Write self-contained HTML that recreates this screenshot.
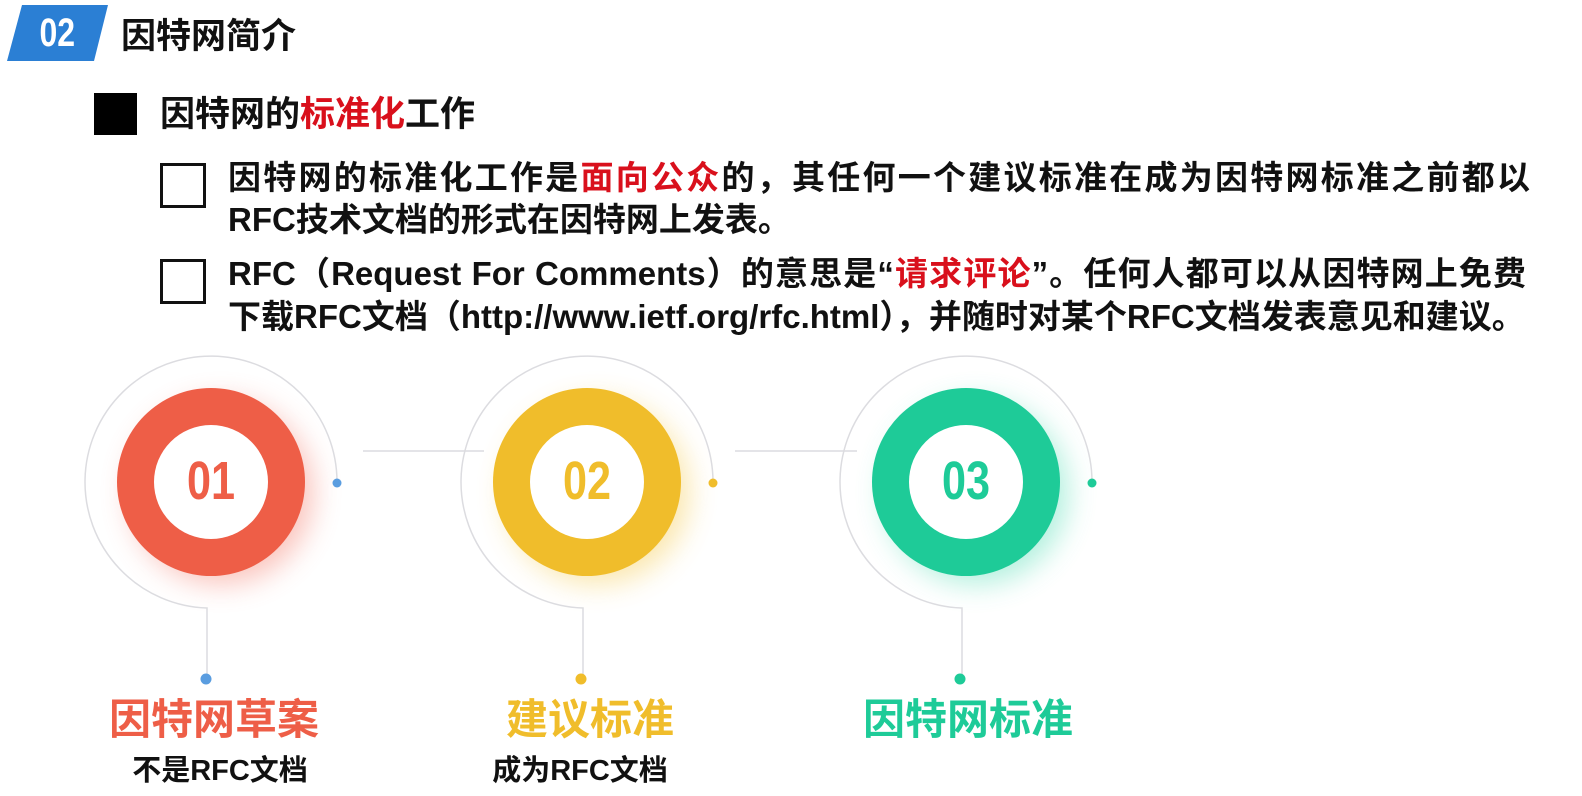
<!DOCTYPE html>
<html><head><meta charset="utf-8"><style>
body{margin:0;width:1582px;height:796px;background:#fff;overflow:hidden;position:relative;font-family:"Liberation Sans","Noto Sans CJK SC",sans-serif;font-weight:bold;color:#111}
.a{position:absolute;white-space:nowrap;line-height:1}
.red{color:#d9101c}
.box{position:absolute;width:40px;height:39px;border:3px solid #111}
.ln{position:absolute;left:228px;font-size:33px;white-space:nowrap;line-height:1}
.j{width:1302px;text-align:justify;text-align-last:justify}
.num{font-family:"Liberation Sans",sans-serif;font-size:54px;transform:scaleX(.8);display:inline-block}
.lab{position:absolute;width:300px;text-align:center;line-height:1}
</style></head><body>
<svg class="a" style="left:0;top:0" width="120" height="70"><polygon points="22,5 108,5 94,61 7,61" fill="#2b7fd4"/></svg>
<div class="a" style="left:32px;top:13px;width:50px;text-align:center;color:#fff;font-size:40px"><span style="display:inline-block;transform:scaleX(.8)">02</span></div>
<div class="a" style="left:121px;top:19px;font-size:35px">因特网简介</div>
<div class="a" style="left:94px;top:93px;width:43px;height:42px;background:#000"></div>
<div class="a" style="left:160px;top:97px;font-size:35px">因特网的<span class="red">标准化</span>工作</div>

<div class="box" style="left:160px;top:163px"></div>
<div class="box" style="left:160px;top:259px"></div>
<div class="ln j" style="top:161px">因特网的标准化工作是<span class="red">面向公众</span>的，其任何一个建议标准在成为因特网标准之前都以</div>
<div class="ln" style="top:203px">RFC技术文档的形式在因特网上发表。</div>
<div class="ln j" style="top:257px;width:1298px">RFC（Request For Comments）的意思是“<span class="red">请求评论</span>”。任何人都可以从因特网上免费</div>
<div class="ln" style="top:300px">下载RFC文档（http://www.ietf.org/rfc.html），并随时对某个RFC文档发表意见和建议。</div>

<svg class="a" style="left:0;top:0" width="1582" height="796">
<defs>
<filter id="g" x="-50%" y="-50%" width="200%" height="200%"><feGaussianBlur stdDeviation="14"/></filter>
</defs>
<g fill="none" stroke="#dcdce0" stroke-width="1.5">
<line x1="363" y1="451" x2="484" y2="451"/>
<line x1="735" y1="451" x2="857" y2="451"/>
</g>
<circle cx="221" cy="492" r="92" fill="#f47a6a" opacity=".45" filter="url(#g)"/>
<path d="M337 482 A126 126 0 1 0 207 608 L207 678" fill="none" stroke="#dcdce0" stroke-width="1.5"/>
<circle cx="211" cy="482" r="94" fill="#ee5e47"/>
<circle cx="211" cy="482" r="57" fill="#fff"/>
<circle cx="337" cy="483" r="4.5" fill="#5a9de0"/>
<circle cx="206" cy="679" r="5.5" fill="#5a9de0"/>

<circle cx="597" cy="492" r="92" fill="#f5c94a" opacity=".45" filter="url(#g)"/>
<path d="M713 482 A126 126 0 1 0 583 608 L583 678" fill="none" stroke="#dcdce0" stroke-width="1.5"/>
<circle cx="587" cy="482" r="94" fill="#f0bd2b"/>
<circle cx="587" cy="482" r="57" fill="#fff"/>
<circle cx="713" cy="483" r="4.5" fill="#f0bd2b"/>
<circle cx="581" cy="679" r="5.5" fill="#f0bd2b"/>

<circle cx="976" cy="492" r="92" fill="#3dd9ab" opacity=".4" filter="url(#g)"/>
<path d="M1092 482 A126 126 0 1 0 962 608 L962 678" fill="none" stroke="#dcdce0" stroke-width="1.5"/>
<circle cx="966" cy="482" r="94" fill="#1ecb98"/>
<circle cx="966" cy="482" r="57" fill="#fff"/>
<circle cx="1092" cy="483" r="4.5" fill="#1ecb98"/>
<circle cx="960" cy="679" r="5.5" fill="#1ecb98"/>
</svg>
<div class="lab" style="left:61px;top:454px;color:#ee5e47"><span class="num">01</span></div>
<div class="lab" style="left:437px;top:454px;color:#f0bd2b"><span class="num">02</span></div>
<div class="lab" style="left:816px;top:454px;color:#1ecb98"><span class="num">03</span></div>

<div class="lab" style="left:64px;top:699px;font-size:42px;color:#ee5e47">因特网草案</div>
<div class="lab" style="left:440px;top:699px;font-size:42px;color:#f0bd2b">建议标准</div>
<div class="lab" style="left:818px;top:699px;font-size:42px;color:#1ecb98">因特网标准</div>
<div class="lab" style="left:70px;top:757px;font-size:29px">不是RFC文档</div>
<div class="lab" style="left:430px;top:757px;font-size:29px">成为RFC文档</div>
</body></html>
